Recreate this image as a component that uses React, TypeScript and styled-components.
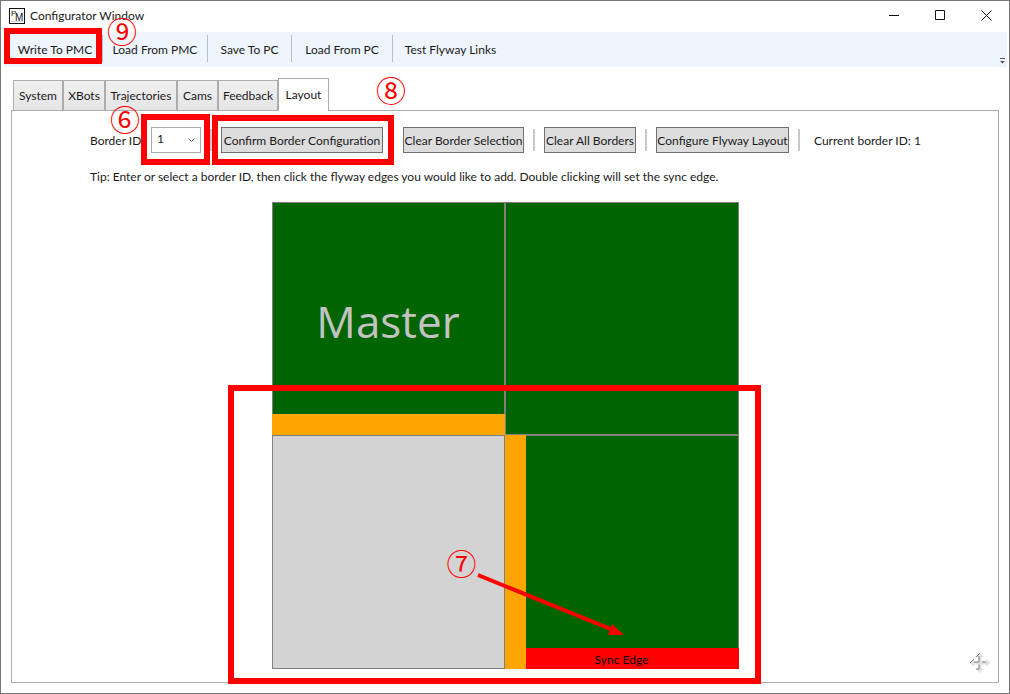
import React from 'react';
import styled, { createGlobalStyle } from 'styled-components';

const GlobalStyle = createGlobalStyle`
  * { box-sizing: border-box; }
  body {
    margin: 0;
    background: #fff;
    color: #1a1a1a;
    font-family: Lato, "Open Sans", sans-serif;
    font-size: 12px;
    line-height: 16px;
  }
  button, select { font: inherit; color: inherit; }
`;

const Window = styled.div`
  display: flex;
  flex-direction: column;
  min-height: 100vh;
  border: 1px solid #777;
  background: #fff;
`;

const TitleBar = styled.header`
  display: flex;
  align-items: center;
  height: 31px;
  padding: 0 0 2px 8px;
  gap: 5px;
`;

const Title = styled.h1`
  flex: 1;
  margin: 0;
  font-size: 12px;
  font-weight: 400;
`;

const CaptionButton = styled.button`
  display: grid;
  place-items: center;
  width: 46px;
  height: 28px;
  padding: 0;
  border: 0;
  background: none;
  margin-left: -5px;
`;

const Toolbar = styled.nav`
  position: relative;
  display: flex;
  height: 35px;
  margin: 0 2px 0 3px;
  padding: 3px 0 5px 4px;
  background: #eef5fd;
`;

const ToolItem = styled.div<{ $w: number }>`
  position: relative;
  width: ${p => p.$w}px;
  border-right: 1px solid #b9bfc6;
  &:last-of-type { border-right: 0; }
`;

const ToolButton = styled.button`
  width: 100%;
  height: 29px;
  padding: 0;
  border: 0;
  background: none;
  white-space: nowrap;
`;

const Grip = styled.button`
  position: absolute;
  right: 1px;
  bottom: 2px;
  width: 7px;
  height: 8px;
  padding: 0;
  border: 0;
  background: none;
  display: grid;
`;

const Body = styled.main`
  display: flex;
  flex: 1;
  flex-direction: column;
  padding: 11px 10px 10px;
`;

const Tabs = styled.div`
  display: flex;
  align-items: flex-end;
  height: 32px;
  padding-left: 2px;
`;

const Tab = styled.button<{ $w: number; $active?: boolean }>`
  position: relative;
  z-index: ${p => (p.$active ? 1 : 0)};
  width: ${p => p.$w}px;
  height: ${p => (p.$active ? 33 : 30)}px;
  margin-bottom: ${p => (p.$active ? -1 : 0)}px;
  padding: 0;
  border: 1px solid #acacac;
  border-bottom: 0;
  background: ${p => (p.$active ? '#fff' : 'linear-gradient(#f0f0f0, #e5e5e5)')};
  white-space: nowrap;
`;

const Panel = styled.section`
  position: relative;
  flex: 1;
  display: flex;
  flex-direction: column;
  align-items: center;
  padding: 16px 0 13px;
  border: 1px solid #acacac;
`;

const Controls = styled.div`
  display: flex;
  flex-direction: column;
  gap: 16px;
  margin-bottom: 17px;
`;

const ControlRow = styled.div`
  display: flex;
  align-items: center;
  height: 26px;
  white-space: nowrap;
`;

const FieldLabel = styled.label`
  width: 61px;
  padding-top: 2px;
`;

const Marked = styled.div`
  position: relative;
`;

const ComboBox = styled.select`
  display: block;
  appearance: none;
  width: 50px;
  height: 26px;
  padding: 0 5px 2px;
  border: 1px solid #acacac;
  border-radius: 0;
  background: #fff;
`;

const Chevron = styled.svg`
  position: absolute;
  right: 6px;
  top: 11px;
  pointer-events: none;
`;

const ActionButton = styled.button<{ $w: number }>`
  display: flex;
  align-items: center;
  justify-content: center;
  width: ${p => p.$w}px;
  height: 26px;
  padding: 2px 0 0;
  border: 1px solid #707070;
  background: #ddd;
`;

const Divider = styled.span`
  width: 2px;
  height: 22px;
  margin: 0 9px;
  background: #c8c8c8;
`;

const Status = styled.output`
  width: 106px;
  padding: 2px 0 0;
  margin-left: 5px;
`;

const Tip = styled.p`
  margin: 0;
`;

const Board = styled.div`
  position: relative;
  display: grid;
  grid-template: 233px 234px / 233px 234px;
`;

const Flyway = styled.div<{ $empty?: boolean }>`
  position: relative;
  display: grid;
  place-items: center;
  border: 1px solid #808080;
  background: ${p => (p.$empty ? '#d3d3d3' : '#006400')};
`;

const Master = styled.span`
  color: #c3c3c3;
  font-family: "Open Sans", sans-serif;
  font-size: 44px;
  line-height: 60px;
  padding-top: 4px;
`;

const Edge = styled.div<{ $side: 'bottom' | 'left'; $sync?: boolean }>`
  position: absolute;
  left: -1px;
  bottom: -1px;
  ${p => (p.$side === 'bottom' ? 'right: -1px; height: 21px;' : 'top: -1px; width: 21px;')}
  background: ${p => (p.$sync ? '#f00' : '#ffa500')};
  text-align: center;
  line-height: 23px;
  color: #000;
`;

const Highlight = styled.div<{ $x: number; $y: number; $w: number; $h: number }>`
  position: absolute;
  z-index: 2;
  left: ${p => p.$x}px;
  top: ${p => p.$y}px;
  width: ${p => p.$w}px;
  height: ${p => p.$h}px;
  border: 6px solid #f00;
  pointer-events: none;
`;

const Step = styled.span<{ $x: number; $y: number }>`
  position: absolute;
  z-index: 3;
  left: ${p => p.$x}px;
  top: ${p => p.$y}px;
  width: 32px;
  color: #f00;
  font-family: "Noto Sans CJK JP", sans-serif;
  font-size: 30px;
  line-height: 28px;
  text-align: center;
  pointer-events: none;
`;

const Arrow = styled.svg`
  position: absolute;
  z-index: 3;
  left: 200px;
  top: 366px;
  pointer-events: none;
`;

const PanHandle = styled.button`
  position: absolute;
  right: 7px;
  bottom: 8px;
  width: 22px;
  height: 22px;
  padding: 0;
  border: 0;
  background: none;
`;

const AppIcon = () => (
  <svg width="16" height="16" viewBox="0 0 16 16" aria-hidden="true">
    <rect x="0.5" y="0.5" width="15" height="15" fill="#fff" stroke="#111" />
    <text x="2" y="8" fontSize="8" fontFamily="Liberation Sans" fill="#111">P</text>
    <text x="6" y="13" fontSize="10" fontFamily="Liberation Sans" fill="#111">M</text>
    <path d="M2 13.500h12" stroke="#bbb" strokeWidth="0.600" />
  </svg>
);

const tabs: [string, number][] = [
  ['System', 50], ['XBots', 42], ['Trajectories', 72], ['Cams', 41], ['Feedback', 60], ['Layout', 51],
];

export default function App() {
  return (
    <>
      <GlobalStyle />
      <Window>
        <TitleBar>
          <AppIcon />
          <Title>Configurator Window</Title>
          <CaptionButton aria-label="Minimize">
            <svg width="11" height="11"><path d="M0 5.5h10" stroke="#111" /></svg>
          </CaptionButton>
          <CaptionButton aria-label="Maximize">
            <svg width="11" height="11"><path d="M.5 .5h9v9h-9z" fill="none" stroke="#111" /></svg>
          </CaptionButton>
          <CaptionButton aria-label="Close">
            <svg width="11" height="11"><path d="M.5 .5l10 10M10.5 .5l-10 10" stroke="#111" /></svg>
          </CaptionButton>
        </TitleBar>
        <Toolbar>
          <ToolItem $w={95}>
            <ToolButton>Write To PMC</ToolButton>
            <Highlight $x={-4} $y={-7} $w={98} $h={36} />
            <Step $x={98} $y={-19}>⑨</Step>
          </ToolItem>
          <ToolItem $w={105}><ToolButton>Load From PMC</ToolButton></ToolItem>
          <ToolItem $w={84}><ToolButton>Save To PC</ToolButton></ToolItem>
          <ToolItem $w={101}><ToolButton>Load From PC</ToolButton></ToolItem>
          <ToolItem $w={115}><ToolButton>Test Flyway Links</ToolButton></ToolItem>
          <Grip aria-label="Toolbar options">
            <svg width="7" height="8"><path d="M1 1.5h5" stroke="#555" /><path d="M1 4h5L3.500 6.500z" fill="#555" /></svg>
          </Grip>
        </Toolbar>
        <Body>
          <Tabs role="tablist">
            {tabs.map(([name, w]) => (
              <Tab key={name} role="tab" $w={w} $active={name === 'Layout'} aria-selected={name === 'Layout'}>
                {name}
              </Tab>
            ))}
          </Tabs>
          <Panel>
            <Controls>
              <ControlRow>
                <FieldLabel htmlFor="border-id">Border ID:</FieldLabel>
                <Marked>
                  <ComboBox id="border-id" defaultValue="1">
                    <option>1</option>
                    <option>2</option>
                  </ComboBox>
                  <Chevron width="7" height="5"><path d="M.5 .5l3 3 3-3" fill="none" stroke="#606060" /></Chevron>
                  <Highlight $x={-10} $y={-13} $w={69} $h={51} />
                  <Step $x={-42} $y={-23}>⑥</Step>
                </Marked>
                <Divider />
                <Marked>
                  <ActionButton $w={162}>Confirm Border Configuration</ActionButton>
                  <Highlight $x={-9} $y={-12} $w={182} $h={50} />
                  <Step $x={154} $y={-52}>⑧</Step>
                </Marked>
                <Divider />
                <ActionButton $w={121}>Clear Border Selection</ActionButton>
                <Divider />
                <ActionButton $w={92}>Clear All Borders</ActionButton>
                <Divider />
                <ActionButton $w={133}>Configure Flyway Layout</ActionButton>
                <Divider />
                <Status>Current border ID: 1</Status>
              </ControlRow>
              <Tip>
                Tip: Enter or select a border ID, then click the flyway edges you would like to add. Double clicking will set the sync edge.
              </Tip>
            </Controls>
            <Board>
              <Flyway>
                <Master>Master</Master>
                <Edge $side="bottom" />
              </Flyway>
              <Flyway />
              <Flyway $empty />
              <Flyway>
                <Edge $side="bottom" $sync>Sync Edge</Edge>
                <Edge $side="left" />
              </Flyway>
              <Highlight $x={-44} $y={183} $w={533} $h={299} />
              <Step $x={174} $y={346}>⑦</Step>
              <Arrow width="160" height="74">
                <path d="M6 7L141 62" stroke="#f00" strokeWidth="4" />
                <path d="M152 67L140 56L136 67z" fill="#f00" />
              </Arrow>
            </Board>
            <PanHandle aria-label="Pan">
              <svg width="22" height="22" viewBox="0 0 22 22">
                <path d="M11 1l4 4h-2.500v4.500H17V7l4 4-4 4v-2.500h-4.500V17H15l-4 4-4-4h2.500v-4.500H5V15l-4-4 4-4v2.500h4.500V5H7z" fill="#e2e2e2" />
                <path d="M7 5l4-4M10 4v6H5M5 7l-4 4M10 12.500V17H7M13 10h4" fill="none" stroke="#808080" />
              </svg>
            </PanHandle>
          </Panel>
        </Body>
      </Window>
    </>
  );
}
